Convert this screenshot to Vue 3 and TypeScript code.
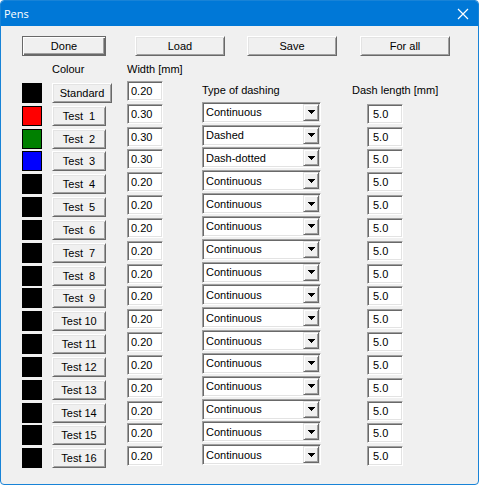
<script setup lang="ts">
import { ref } from 'vue'

interface Pen {
  name: string
  colour: string
  width: string
  dashing: string
  dashLength: string
}

const dashTypes = ['Continuous', 'Dashed', 'Dash-dotted']

const standard: Pen = { name: 'Standard', colour: 'black', width: '0.20', dashing: '', dashLength: '' }

const tests: Pen[] = Array.from({ length: 16 }, (_, i) => ({
  name: 'Test ' + String(i + 1).padStart(2, ' '),
  colour: ['red', 'green', 'blue'][i] ?? 'black',
  width: i < 3 ? '0.30' : '0.20',
  dashing: dashTypes[i < 3 ? i : 0],
  dashLength: '5.0',
}))

const pens = ref<Pen[]>([standard, ...tests])
</script>

<template>
  <main class="dialog">
    <header class="title-bar">
      <h1>Pens</h1>
      <button class="close" type="button" aria-label="Close">
        <svg viewBox="0 0 12 12" width="12" height="12" aria-hidden="true">
          <path d="M1 1L11 11M11 1L1 11" fill="none" stroke="#fff" stroke-width="1.2" />
        </svg>
      </button>
    </header>

    <form class="content" @submit.prevent>
      <div class="actions">
        <button class="push default" type="submit">Done</button>
        <button class="push" type="button">Load</button>
        <button class="push" type="button">Save</button>
        <button class="push" type="button">For all</button>
      </div>

      <div class="columns headings">
        <span class="colour-heading">Colour</span>
        <span>Width [mm]</span>
      </div>

      <div class="pens">
        <div v-for="pen in pens" :key="pen.name" class="columns pen">
          <span class="swatch" :class="pen.colour"></span>
          <button class="push name" :class="{ wide: !pen.dashing }" type="button">{{ pen.name }}</button>
          <input v-model="pen.width" class="field" type="text" :aria-label="pen.name + ' width'" />
          <template v-if="pen.dashing">
            <span class="combo">
              <select v-model="pen.dashing" :aria-label="pen.name + ' type of dashing'">
                <option v-for="type in dashTypes" :key="type">{{ type }}</option>
              </select>
              <span class="drop">
                <svg viewBox="0 0 7 4" width="7" height="4" shape-rendering="crispEdges" aria-hidden="true">
                  <path d="M0 0H7V1H6V2H5V3H4V4H3V3H2V2H1V1H0Z" />
                </svg>
              </span>
            </span>
            <input v-model="pen.dashLength" class="field dash" type="text" :aria-label="pen.name + ' dash length'" />
          </template>
          <template v-else>
            <span class="heading">Type of dashing</span>
            <span class="heading">Dash length [mm]</span>
          </template>
        </div>
      </div>
    </form>
  </main>
</template>

<style>
body {
  background: #fff;
}
</style>

<style scoped>
.dialog {
  box-sizing: border-box;
  min-height: 100vh;
  display: flex;
  flex-direction: column;
  border: 1px solid #1883d7;
  border-radius: 4px;
  background: #f0f0f0;
  color: #000;
  font: 11px/16px "Liberation Sans", Arial, sans-serif;
  overflow: hidden;
}

.title-bar {
  display: flex;
  align-items: center;
  justify-content: space-between;
  height: 25px;
  padding: 0 9px 0 3px;
  background: #0078d7;
  color: #fff;
}

h1 {
  margin: 0;
  font: 11px/24px "Open Sans", "Noto Sans", sans-serif;
}

.close {
  display: flex;
  padding: 0;
  border: 0;
  background: none;
}

.content {
  flex: 1;
  display: flex;
  flex-direction: column;
  padding: 10px 21px 17px;
}

.actions {
  display: grid;
  grid-template-columns: 113fr 112fr 113fr 97fr;
  margin-bottom: 5px;
}

.push {
  box-sizing: border-box;
  width: 90px;
  height: 20px;
  padding: 0;
  border: 1px solid;
  border-color: #fff #696969 #696969 #fff;
  background: #f0f0f0;
  box-shadow: inset 1px 1px #e3e3e3, inset -1px -1px #a0a0a0;
  color: #000;
  font: inherit;
  text-align: center;
  white-space: pre;
}

.push.default {
  width: 84px;
  border-color: #696969;
  box-shadow: inset 1px 1px #fff, inset -1px -1px #696969, inset -2px -2px #a0a0a0;
}

.columns {
  display: grid;
  grid-template-columns: 30px 75fr 75fr 150fr 105fr;
  align-items: start;
}

.headings {
  height: 18px;
}

.colour-heading {
  grid-column: 2;
}

.pens {
  flex: 1;
  display: grid;
  grid-auto-rows: minmax(22px, 1fr);
}

.pen {
  height: 22px;
}

.swatch {
  box-sizing: border-box;
  width: 20px;
  height: 20px;
  margin-top: 4px;
  border: 1px solid #000;
}

.black { background: #000; }
.red { background: #f00; }
.green { background: #008000; }
.blue { background: #00f; }

.push.name {
  width: 54px;
  margin-top: 4px;
}

.push.wide {
  width: 60px;
}

.field,
.combo {
  box-sizing: border-box;
  border: 1px solid;
  border-color: #a0a0a0 #fff #fff #a0a0a0;
  background: #fff;
  box-shadow: inset 1px 1px #696969, inset -1px -1px #e3e3e3;
}

.field {
  width: 36px;
  height: 20px;
  margin-top: 2px;
  padding: 0 1px 0 3px;
  border-radius: 0;
  color: #000;
  font: inherit;
}

.field.dash {
  margin-left: 15px;
  padding-left: 5px;
}

.combo {
  position: relative;
  display: flex;
  width: 119px;
  height: 21px;
  padding: 1px;
}

select {
  flex: 1;
  appearance: none;
  margin: 0;
  padding: 0 16px 0 2px;
  border: 0;
  border-radius: 0;
  background: none;
  color: #000;
  font: inherit;
}

.drop {
  position: absolute;
  top: 1px;
  right: 1px;
  bottom: 1px;
  box-sizing: border-box;
  width: 16px;
  display: grid;
  place-items: center;
  border: 1px solid;
  border-color: #e3e3e3 #696969 #696969 #e3e3e3;
  background: #f0f0f0;
  box-shadow: inset 1px 1px #fff, inset -1px -1px #a0a0a0;
  pointer-events: none;
}

.heading {
  margin-top: 3px;
}
</style>
